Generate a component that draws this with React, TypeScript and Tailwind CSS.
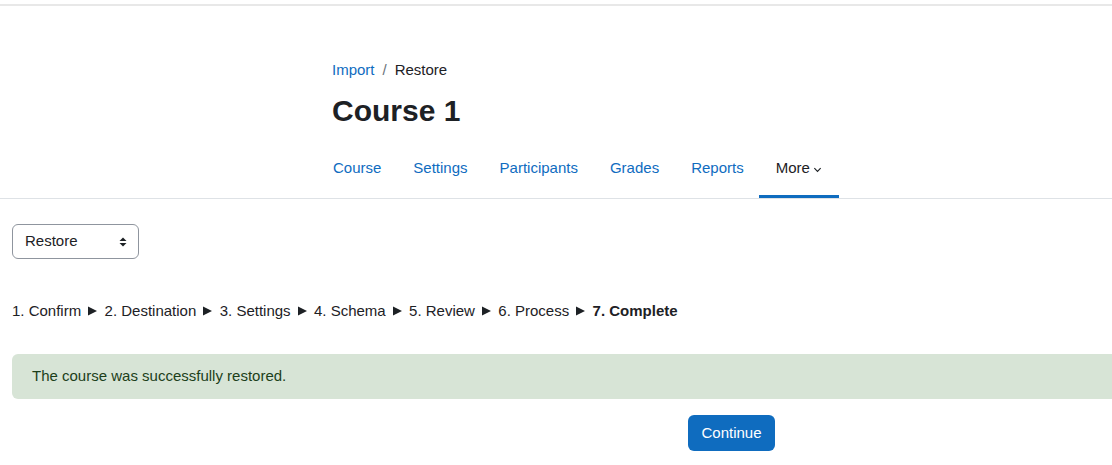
import React from "react";

export default function App() {
  const tabs = ["Course", "Settings", "Participants", "Grades", "Reports"];
  const steps = ["1. Confirm", "2. Destination", "3. Settings", "4. Schema", "5. Review", "6. Process"];
  return (
    <div className="w-[1112px] h-[465px] overflow-hidden bg-white text-[15px] text-[#1d2125]" style={{ fontFamily: '"Liberation Sans", Arial, sans-serif' }}>
      <div className="h-[4px] bg-white" />
      <div className="h-[2px] bg-[#e8e8e8]" />
      <div className="pl-[332px] pt-[54px]">
        <div className="flex items-center text-[15px] leading-[20px]">
          <span className="text-[#0f6cbf]">Import</span>
          <span className="px-[8px] text-[#6a737b]">/</span>
          <span>Restore</span>
        </div>
        <h2 className="mt-[13px] text-[30px] font-bold leading-[36px]">Course 1</h2>
        <nav className="mt-[22px] -ml-[15px] flex">
          {tabs.map((t) => (
            <div key={t} className="px-[16px] pt-[7px] pb-[20px] text-[#0f6cbf] leading-[20px]">
              {t}
            </div>
          ))}
          <div className="-ml-[1px] px-[17px] pt-[7px] pb-[17px] leading-[20px] text-[#1d2125] border-b-[3px] border-[#0f6cbf] flex items-center gap-[3px]">
            More
            <svg width="9" height="9" viewBox="0 0 10 10" className="mt-[2px]">
              <path d="M1.5 3.5 L5 7 L8.5 3.5" fill="none" stroke="#1d2125" strokeWidth="1.3" />
            </svg>
          </div>
        </nav>
      </div>
      <div className="h-px bg-[#dee2e6]" />
      <div className="px-[12px]">
        <div className="mt-[25px] w-[127px] h-[35px] border border-[#8f959e] rounded-[6px] flex items-center justify-between pl-[12px] pr-[11px]">
          <span>Restore</span>
          <svg width="8" height="12" viewBox="0 0 8 12">
            <path d="M4 1.5 L7.5 5 L0.5 5 Z" fill="#1d2125" />
            <path d="M4 10.5 L7.5 7 L0.5 7 Z" fill="#1d2125" />
          </svg>
        </div>
        <div className="mt-[42px] leading-[20px] flex items-center">
          {steps.map((s) => (
            <span key={s} className="flex items-center">
              <span>{s}</span>
              <svg width="9" height="10" viewBox="0 0 9 10" className="ml-[7px] mr-[7.4px] shrink-0">
                <path d="M0 0.5 L9 5 L0 9.5 Z" fill="#1d2125" />
              </svg>
            </span>
          ))}
          <span className="font-bold">7. Complete</span>
        </div>
        <div className="mt-[33px] w-[1200px] h-[45px] rounded-[6px] bg-[#d7e4d6] text-[#1c3f1a] flex items-center pl-[20px]">
          The course was successfully restored.
        </div>
        <div className="mt-[16px] ml-[676px] w-[87px] h-[36px] rounded-[6px] bg-[#0f6cbf] text-white flex items-center justify-center">
          Continue
        </div>
      </div>
    </div>
  );
}
